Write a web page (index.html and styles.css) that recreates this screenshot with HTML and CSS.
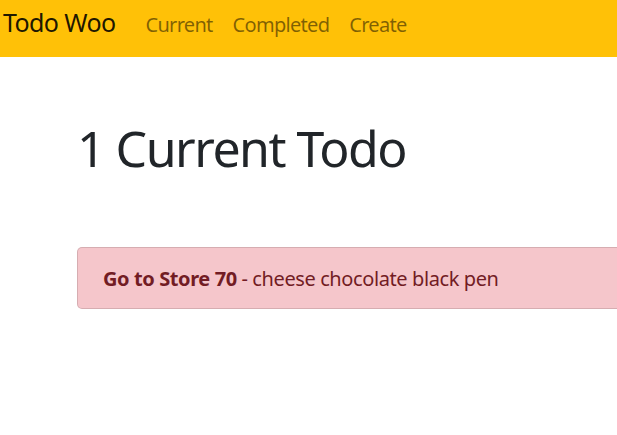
FILE: index.html
```html
<!DOCTYPE html>
<html>
<head>
<meta charset="utf-8">
<link rel="stylesheet" href="styles.css">
</head>
<body>
<nav class="navbar">
  <a class="brand" href="#">Todo Woo</a>
  <ul class="nav">
    <li><a class="nav-link" href="#">Current</a></li>
    <li><a class="nav-link" href="#">Completed</a></li>
    <li><a class="nav-link" href="#">Create</a></li>
  </ul>
</nav>
<main class="container">
  <h1 class="title">1 Current Todo</h1>
  <div class="todo-list">
    <a class="todo-item" href="#"><b>Go to Store 70</b> - cheese chocolate black pen</a>
  </div>
</main>
</body>
</html>
```
FILE: styles.css
```css
html, body {
  margin: 0;
  padding: 0;
  overflow: hidden;
}
body {
  font-family: "Noto Sans", "Open Sans", sans-serif;
  font-size: 20px;
  line-height: 1.5;
  color: #212529;
  background: #fff;
}
.navbar {
  display: flex;
  align-items: baseline;
  height: 57px;
  box-sizing: border-box;
  padding: 0 0 0 3px;
  background: #ffc107;
}
.brand {
  font-size: 25px;
  line-height: 1.5;
  letter-spacing: -0.6px;
  color: rgba(0, 0, 0, 0.9);
  text-decoration: none;
  margin-right: 20px;
}
.nav {
  display: flex;
  align-items: baseline;
  list-style: none;
  margin: 0;
  padding: 0;
}
.nav-link {
  display: block;
  padding: 10px;
  letter-spacing: -0.7px;
  color: rgba(0, 0, 0, 0.5);
  text-decoration: none;
}
.container {
  padding-left: 77px;
}
.title {
  margin: 61px 0 0;
  font-size: 50px;
  font-weight: 400;
  line-height: 1.2;
  letter-spacing: -1.5px;
}
.todo-list {
  margin-top: 69px;
  width: 800px;
}
.todo-item {
  display: block;
  padding: 16px 25px 14px;
  background: #f5c6cb;
  color: #721c24;
  border: 1px solid rgba(0, 0, 0, 0.125);
  border-radius: 5px;
  letter-spacing: -0.4px;
  text-decoration: none;
}
.todo-item b {
  font-weight: 700;
}
```
